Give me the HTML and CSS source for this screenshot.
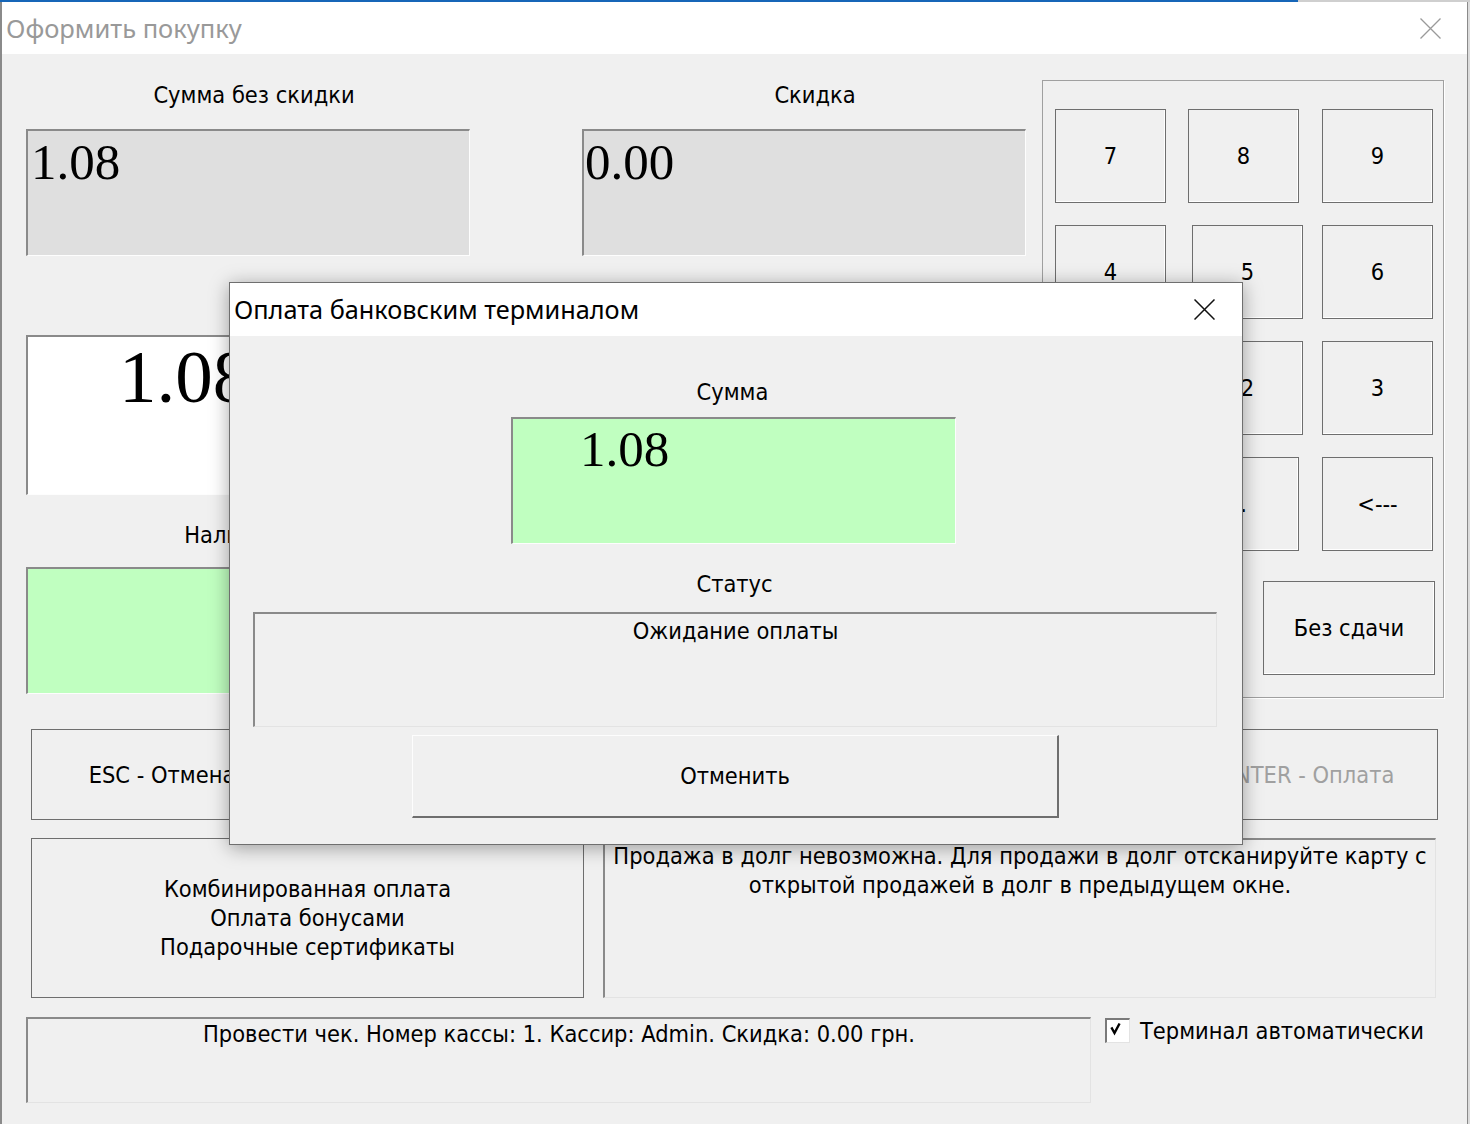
FILE: index.html
```html
<!DOCTYPE html>
<html lang="ru">
<head>
<meta charset="utf-8">
<title>Оформить покупку</title>
<link rel="stylesheet" href="styles.css">
</head>
<body>
<div class="win">
  <div class="titlebar">
    <span class="title">Оформить покупку</span>
    <svg class="close-main" width="21" height="21" viewBox="0 0 21 21"><path d="M0.5 0.5L20.5 20.5M20.5 0.5L0.5 20.5" stroke="#9a9a9a" stroke-width="1.3" fill="none"/></svg>
  </div>
  <div class="content">
    <div class="top">
      <div class="left">
        <div class="pair">
          <div class="field">
            <div class="lbl l1">Сумма без скидки</div>
            <div class="box ro"><span class="num n1">1.08</span></div>
          </div>
          <div class="field">
            <div class="lbl l2">Скидка</div>
            <div class="box ro"><span class="num n2">0.00</span></div>
          </div>
        </div>
        <div class="pair pay">
          <div class="field">
            <div class="box white"><span class="num bignum">1.08</span></div>
            <div class="lbl l3">Наличные</div>
            <div class="box green"></div>
          </div>
        </div>
      </div>
      <div class="pad">
        <div class="keys">
          <div class="key">7</div><div class="key">8</div><div class="key">9</div>
          <div class="key">4</div><div class="key sh">5</div><div class="key">6</div>
          <div class="key">1</div><div class="key sh">2</div><div class="key">3</div>
          <div class="key">0</div><div class="key">.</div><div class="key">&lt;---</div>
        </div>
        <div class="key nochange">Без сдачи</div>
      </div>
    </div>
    <div class="actions">
      <div class="btn esc">ESC - Отмена</div>
      <div class="btn enter">ENTER - Оплата</div>
    </div>
    <div class="row3">
      <div class="btn combo"><span>Комбинированная оплата</span><span>Оплата бонусами</span><span>Подарочные сертификаты</span></div>
      <div class="debt">Продажа в долг невозможна. Для продажи в долг отсканируйте карту с<br>открытой продажей в долг в предыдущем окне.</div>
    </div>
    <div class="row4">
      <div class="status">Провести чек. Номер кассы: 1. Кассир: Admin. Скидка: 0.00 грн.</div>
      <div class="chk">
        <span class="cb"><svg width="21" height="21" viewBox="0 0 21 21"><path d="M5 8.5L7.5 13L12 4.5" stroke="#000" stroke-width="2.4" fill="none" stroke-linecap="square"/></svg></span>
        <span class="chk-text">Терминал автоматически</span>
      </div>
    </div>
  </div>
</div>

<div class="dialog">
  <div class="dtitle">
    <span class="dtitle-text">Оплата банковским терминалом</span>
    <svg class="close-dlg" width="21" height="21" viewBox="0 0 21 21"><path d="M0.5 0.5L20.5 20.5M20.5 0.5L0.5 20.5" stroke="#111" stroke-width="1.5" fill="none"/></svg>
  </div>
  <div class="dbody">
    <div class="dlbl dl1">Сумма</div>
    <div class="dgreen"><span class="num dnum">1.08</span></div>
    <div class="dlbl dl2">Статус</div>
    <div class="dstatus">Ожидание оплаты</div>
    <div class="dbtn">Отменить</div>
  </div>
</div>
</body>
</html>
```

FILE: styles.css
```css
* { box-sizing: border-box; }
html, body { margin: 0; padding: 0; }
body {
  width: 1470px;
  height: 1124px;
  overflow: hidden;
  position: relative;
  background: #dcdcdc linear-gradient(to right, #1666b8 0, #1666b8 1298px, #cfcfcf 1298px) no-repeat top left / 100% 2px;
  font-family: "DejaVu Sans Condensed", "DejaVu Sans", sans-serif;
  font-stretch: condensed;
  font-size: 23.4px;
  color: #000;
}

.win {
  margin-top: 2px;
  width: 1468px;
  height: 1122px;
  border-left: 2px solid #8a8a8a;
  border-right: 1px solid #8a8a8a;
  background: #f0f0f0;
}

.titlebar {
  height: 52px;
  background: #fff;
  display: flex;
  align-items: center;
  justify-content: space-between;
}
.title {
  font-family: "Noto Sans", "Open Sans", sans-serif;
  font-stretch: normal;
  font-size: 25.5px;
  line-height: 52px;
  color: #999;
  padding-left: 4px;
}
.close-main { margin-right: 26px; }

.content { padding-left: 24px; }

.top { display: flex; padding-top: 26px; }
.left { width: 1000px; margin-right: 16px; }
.pair { display: flex; gap: 112px; }
.field { width: 444px; }

.lbl {
  height: 30px;
  line-height: 30px;
  text-align: center;
  white-space: nowrap;
}
.l1 { padding-left: 12px; }
.l2 { padding-left: 22px; }
.l3 { margin-top: 25px; padding-right: 16px; }

.box {
  height: 127px;
  margin-top: 19px;
  border-style: solid;
  border-width: 2px 1px 1px 2px;
  border-color: #8a8a8a #fdfdfd #fdfdfd #8a8a8a;
}
.ro { background: #dfdfdf; }
.white { background: #fff; height: 160px; margin-top: 0; }
.green { background: #c0ffc0; margin-top: 17px; }
.pay { margin-top: 79px; }

.num {
  display: block;
  font-family: "Liberation Serif", "Times New Roman", serif;
  font-stretch: normal;
  font-size: 51px;
  line-height: 51px;
  padding-top: 6px;
}
.n1 { padding-left: 3px; }
.n2 { padding-left: 1px; }
.bignum {
  font-size: 75px;
  line-height: 75px;
  padding: 2px 0 0 91px;
}

.pad {
  width: 402px;
  height: 618px;
  border: 1px solid #a0a0a0;
  box-shadow: 1px 1px 0 #fff;
  display: flex;
  flex-direction: column;
}
.keys {
  display: grid;
  grid-template-columns: 133px 134px 111px;
  grid-auto-rows: 94px;
  row-gap: 22px;
  padding: 28px 0 0 12px;
}
.key {
  width: 111px;
  height: 94px;
  border: 1px solid #6e6e6e;
  box-shadow: inset -1px -1px 0 #fff;
  display: flex;
  align-items: center;
  justify-content: center;
  background: #f0f0f0;
}
.sh { margin-left: 4px; }
.nochange {
  width: 172px;
  margin: 30px 8px 0 auto;
}

.actions {
  display: flex;
  justify-content: space-between;
  width: 1407px;
  height: 91px;
  margin: 31px 0 0 5px;
}
.btn {
  border: 1px solid #6e6e6e;
  display: flex;
  align-items: center;
  justify-content: center;
  text-align: center;
  white-space: nowrap;
}
.esc { width: 262px; }
.enter { width: 260px; color: #a0a0a0; }

.row3 {
  display: flex;
  gap: 19px;
  height: 160px;
  margin: 18px 0 0 5px;
}
.combo {
  width: 553px;
  flex-direction: column;
  line-height: 29px;
}
.debt {
  width: 833px;
  text-align: center;
  line-height: 29px;
  padding-top: 2px;
  white-space: nowrap;
  border-style: solid;
  border-width: 2px 1px 1px 2px;
  border-color: #8a8a8a #e3e3e3 #e3e3e3 #8a8a8a;
}

.row4 {
  display: flex;
  margin-top: 19px;
}
.status {
  width: 1065px;
  height: 86px;
  text-align: center;
  line-height: 29px;
  padding-top: 1px;
  white-space: nowrap;
  border-style: solid;
  border-width: 2px 1px 1px 2px;
  border-color: #8a8a8a #e3e3e3 #e3e3e3 #8a8a8a;
}
.chk {
  display: flex;
  align-items: flex-start;
  gap: 10px;
  margin-left: 14px;
}
.cb {
  width: 25px;
  height: 25px;
  margin-top: 1px;
  background: #fff;
  border-style: solid;
  border-width: 2px 1px 1px 2px;
  border-color: #7a7a7a #e3e3e3 #e3e3e3 #7a7a7a;
  display: block;
}
.cb svg { display: block; }
.chk-text { line-height: 29px; margin-top: 0; white-space: nowrap; }

/* overlay dialog */
.dialog {
  position: absolute;
  left: 229px;
  top: 282px;
  width: 1014px;
  height: 563px;
  border: 1px solid #6f6f6f;
  background: #f0f0f0;
  box-shadow: 0 3px 18px rgba(0, 0, 0, 0.35);
}
.dtitle {
  height: 53px;
  background: #fff;
  display: flex;
  align-items: center;
  justify-content: space-between;
}
.dtitle-text {
  font-family: "Noto Sans", "Open Sans", sans-serif;
  font-stretch: normal;
  font-size: 25.3px;
  line-height: 53px;
  padding-left: 4px;
}
.close-dlg { margin-right: 27px; }

.dbody {
  display: flex;
  flex-direction: column;
  align-items: flex-start;
}
.dlbl {
  width: 100%;
  height: 30px;
  line-height: 30px;
  text-align: center;
}
.dl1 { margin-top: 41px; padding-right: 7px; }
.dl2 { margin-top: 25px; padding-right: 3px; }
.dgreen {
  margin: 10px 0 0 281px;
  width: 445px;
  height: 127px;
  background: #c0ffc0;
  border-style: solid;
  border-width: 2px 1px 1px 2px;
  border-color: #8a8a8a #fdfdfd #fdfdfd #8a8a8a;
}
.dnum { padding: 5px 0 0 67px; }
.dstatus {
  margin: 13px 0 0 23px;
  width: 964px;
  height: 115px;
  text-align: center;
  line-height: 29px;
  padding-top: 3px;
  border-style: solid;
  border-width: 2px 1px 1px 2px;
  border-color: #8a8a8a #e3e3e3 #e3e3e3 #8a8a8a;
}
.dbtn {
  margin: 8px 0 0 182px;
  width: 647px;
  height: 83px;
  display: flex;
  align-items: center;
  justify-content: center;
  border-style: solid;
  border-width: 1px 2px 2px 1px;
  border-color: #fdfdfd #6e6e6e #6e6e6e #fdfdfd;
}
```
